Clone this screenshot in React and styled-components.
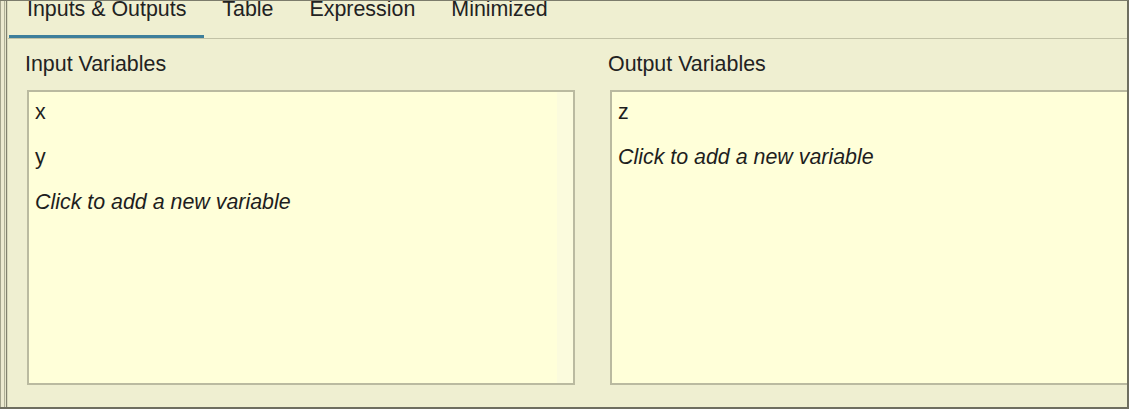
import styled, { createGlobalStyle } from "styled-components";

const GlobalStyle = createGlobalStyle`
  html, body {
    margin: 0;
    padding: 0;
    background: #efefd1;
  }
  body {
    font-family: "Liberation Sans", Arial, sans-serif;
    overflow: hidden;
  }
`;

const Frame = styled.div`
  width: 1129px;
  height: 409px;
  box-sizing: border-box;
  display: flex;
  border-top: 1px solid #7c7c6c;
  border-right: 2px solid #6e6e60;
  border-bottom: 2px solid #6e6e60;
  background: #efefd1;
  overflow: hidden;
`;

const Edge = styled.div`
  width: 8px;
  flex-shrink: 0;
  background: linear-gradient(
    to right,
    #a3a38c 0,
    #a3a38c 1px,
    #ecead0 1px,
    #ecead0 4px,
    #b0b097 4px,
    #b0b097 5px,
    #e6e6cb 5px,
    #e6e6cb 6px,
    #82826f 6px,
    #82826f 7px,
    #d9d9bd 7px,
    #d9d9bd 8px
  );
`;

const Panel = styled.div`
  flex: 1;
  min-width: 0;
  display: flex;
  flex-direction: column;
  overflow: hidden;
`;

const TabBar = styled.div`
  display: flex;
  margin-top: -4px;
  height: 41px;
  padding-left: 1px;
  border-bottom: 1px solid #c2c2a6;
`;

const Tab = styled.div`
  box-sizing: border-box;
  height: 41px;
  padding: 0 18px;
  font-size: 21.4px;
  line-height: 24px;
  color: #222;
  white-space: nowrap;
  border-bottom: 3px solid ${(p) => (p.$active ? "#3e7f9b" : "transparent")};
`;

const Columns = styled.div`
  display: grid;
  grid-template-columns: 550px 550px;
  column-gap: 33px;
  padding: 13px 0 0 17px;
`;

const Column = styled.div`
  display: flex;
  flex-direction: column;
`;

const Label = styled.div`
  font-size: 21.4px;
  line-height: 24px;
  color: #222;
  margin-bottom: 14px;
`;

const VarBox = styled.div`
  margin-left: 2px;
  width: 548px;
  height: 295px;
  box-sizing: border-box;
  border: 2px solid #babaa0;
  background: #ffffd9;
  display: flex;
`;

const VarList = styled.div`
  flex: 1;
  display: flex;
  flex-direction: column;
`;

const Gutter = styled.div`
  width: 16px;
  background: #fbfbdd;
`;

const VarRow = styled.div`
  height: 45px;
  box-sizing: border-box;
  padding: 8px 0 0 6px;
  font-size: 21.4px;
  line-height: 24px;
  color: #1e1e1e;
  font-style: ${(p) => (p.$hint ? "italic" : "normal")};
`;

const tabs = ["Inputs & Outputs", "Table", "Expression", "Minimized"];

const VariableColumn = ({ title, vars }) => (
  <Column>
    <Label>{title}</Label>
    <VarBox>
      <VarList>
        {vars.map((v) => (
          <VarRow key={v}>{v}</VarRow>
        ))}
        <VarRow $hint>Click to add a new variable</VarRow>
      </VarList>
      <Gutter />
    </VarBox>
  </Column>
);

const App = () => {
  return (
    <>
      <GlobalStyle />
      <Frame>
        <Edge />
        <Panel>
          <TabBar>
            {tabs.map((t, i) => (
              <Tab key={t} $active={i === 0}>
                {t}
              </Tab>
            ))}
          </TabBar>
          <Columns>
            <VariableColumn title="Input Variables" vars={["x", "y"]} />
            <VariableColumn title="Output Variables" vars={["z"]} />
          </Columns>
        </Panel>
      </Frame>
    </>
  );
};

export default App;
